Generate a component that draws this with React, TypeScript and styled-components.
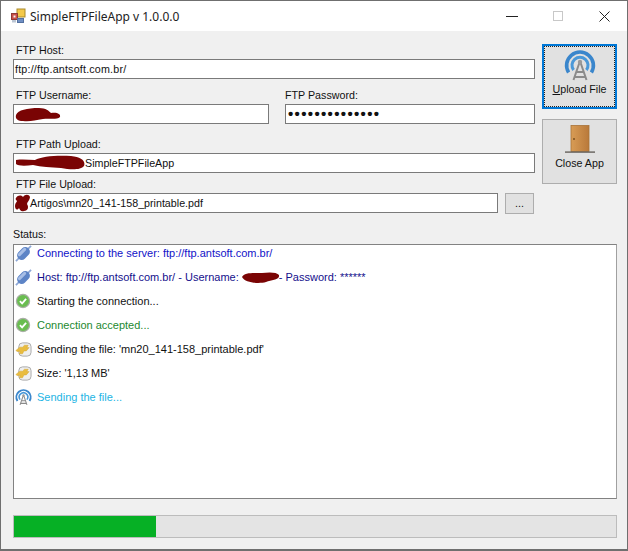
import React from "react";
import styled, { createGlobalStyle } from "styled-components";

const GlobalStyle = createGlobalStyle`
  html, body {
    margin: 0;
    padding: 0;
    background: #f0f0f0;
  }
`;

const Window = styled.div`
  box-sizing: border-box;
  width: 628px;
  height: 551px;
  display: flex;
  flex-direction: column;
  background: #f0f0f0;
  border: 1px solid #6f6f6f;
  border-bottom-width: 2px;
  font-family: "Liberation Sans", Arial, sans-serif;
  font-size: 10.7px;
  color: #111;
`;

const TitleBar = styled.div`
  display: flex;
  align-items: center;
  height: 30px;
  flex-shrink: 0;
  background: #fff;
  padding-left: 9px;
`;

const Title = styled.span`
  margin-left: 4px;
  flex: 1;
  font-family: "Noto Sans", sans-serif;
  font-size: 12px;
  color: #222;
`;

const CaptionButton = styled.div`
  width: 46px;
  height: 30px;
  display: flex;
  align-items: center;
  justify-content: center;
`;

const Body = styled.div`
  display: flex;
  flex-direction: column;
  padding: 13px 10px 0 12px;
`;

const TopArea = styled.div`
  display: flex;
  gap: 7px;
`;

const Fields = styled.div`
  width: 522px;
  display: flex;
  flex-direction: column;
`;

const Row = styled.div<{ $top?: number }>`
  display: flex;
  gap: 16px;
  margin-top: ${(p) => p.$top ?? 0}px;
`;

const Field = styled.div<{ $top?: number; $width?: number }>`
  display: flex;
  flex-direction: column;
  margin-top: ${(p) => p.$top ?? 0}px;
  width: ${(p) => (p.$width ? `${p.$width}px` : "100%")};
`;

const FieldLabel = styled.label<{ $flush?: boolean }>`
  height: 15px;
  line-height: 13px;
  padding-left: ${(p) => (p.$flush ? 0 : 3)}px;
`;

const TextBox = styled.div<{ $width?: number; $spacing?: number }>`
  box-sizing: border-box;
  height: 20px;
  width: ${(p) => (p.$width ? `${p.$width}px` : "100%")};
  display: flex;
  align-items: center;
  padding-left: 1px;
  letter-spacing: ${(p) => p.$spacing ?? 0}px;
  background: #fff;
  border: 1px solid #7a7a7a;
  white-space: pre;
`;

const Dots = styled.span`
  font-size: 15px;
  font-weight: bold;
  letter-spacing: 1.35px;
  line-height: 18px;
  padding-left: 1px;
  color: #111;
`;

const FileRow = styled.div`
  display: flex;
  gap: 7px;
  align-items: flex-start;
`;

const BrowseButton = styled.div`
  box-sizing: border-box;
  width: 29px;
  height: 21px;
  display: flex;
  align-items: center;
  justify-content: center;
  padding-bottom: 2px;
  background: #e1e1e1;
  border: 1px solid #adadad;
`;

const Buttons = styled.div`
  display: flex;
  flex-direction: column;
  gap: 10px;
  width: 75px;
`;

const ActionButton = styled.div<{ $focused?: boolean }>`
  position: relative;
  box-sizing: border-box;
  height: 65px;
  display: flex;
  flex-direction: column;
  align-items: center;
  padding-top: ${(p) => (p.$focused ? 4 : 5)}px;
  background: #e1e1e1;
  border: ${(p) => (p.$focused ? "2px solid #0078d7" : "1px solid #adadad")};
  ${(p) =>
    p.$focused &&
    `&::after {
      content: "";
      position: absolute;
      inset: 0;
      border: 1px dotted #222;
    }`}
`;

const ButtonLabel = styled.span<{ $top: number }>`
  margin-top: ${(p) => p.$top}px;
  line-height: 14px;
`;

const Mnemonic = styled.span`
  text-decoration: underline;
`;

const StatusLabel = styled.div`
  margin-top: 14px;
  height: 16px;
  line-height: 13px;
`;

const StatusList = styled.div`
  box-sizing: border-box;
  width: 604px;
  height: 255px;
  display: flex;
  flex-direction: column;
  gap: 8px;
  font-size: 11px;
  background: #fff;
  border: 1px solid #828282;
  border-right-color: #a0a0a0;
`;

const StatusRow = styled.div<{ $color: string }>`
  height: 16px;
  flex-shrink: 0;
  display: flex;
  align-items: center;
  padding-left: 1px;
  color: ${(p) => p.$color};
  white-space: pre;
`;

const StatusIcon = styled.span`
  width: 22px;
  height: 16px;
  display: flex;
  align-items: center;
`;

const ProgressTrack = styled.div`
  box-sizing: border-box;
  width: 604px;
  height: 23px;
  margin-top: 16px;
  background: #e4e4e4;
  border: 1px solid #bcbcbc;
`;

const ProgressFill = styled.div`
  height: 100%;
  background: #06b025;
`;

const Redaction = ({ width, height, d, viewBox }: { width: number; height: number; d: string; viewBox: string }) => (
  <svg width={width} height={height} viewBox={viewBox} style={{ flexShrink: 0 }}>
    <path d={d} fill="#7a0404" />
  </svg>
);

const AppIcon = () => (
  <svg width="16" height="16" viewBox="0 0 16 16">
    <rect x="7" y="1" width="8" height="8" fill="#f4c94a" stroke="#a98a2c" />
    <rect x="1.5" y="5.5" width="6" height="6" fill="#c8504a" stroke="#8e3a36" />
    <rect x="3.5" y="7.5" width="2" height="2" fill="#f2f2f2" />
    <rect x="7.5" y="10.5" width="6" height="4" fill="#6f8fc4" stroke="#53709f" />
    <rect x="2" y="12" width="4" height="2.5" fill="#bcc6d4" />
  </svg>
);

const Antenna = ({ size }: { size: number }) => (
  <svg width={size} height={size} viewBox="0 0 32 32">
    <path d="M4.6 22.5 A13.4 13.4 0 1 1 27.4 22.5" fill="none" stroke="#3a86cc" strokeWidth="3.6" />
    <path d="M9.6 20 A8 8 0 1 1 22.4 20" fill="none" stroke="#4a98d8" strokeWidth="3" />
    <path d="M16 11 L9.5 30 M16 11 L22.5 30 M12.6 22 H19.4 M11 27 H21" fill="none" stroke="#8b8b8b" strokeWidth="2" />
    <circle cx="16" cy="12" r="2.2" fill="#9a9a9a" />
  </svg>
);

const Door = () => (
  <svg width="32" height="28" viewBox="0 0 32 28">
    <defs>
      <linearGradient id="doorWood" x1="0" x2="1" y1="0" y2="0">
        <stop offset="0" stopColor="#d89c55" />
        <stop offset="1" stopColor="#b9793a" />
      </linearGradient>
    </defs>
    <rect x="7" y="0.5" width="18" height="26" fill="url(#doorWood)" stroke="#a97338" strokeWidth="0.8" />
    <circle cx="10" cy="14" r="1" fill="#7a4f1f" />
    <rect x="1" y="26.4" width="30" height="1.4" fill="#66625c" />
  </svg>
);

const Plug = () => (
  <svg width="17" height="17" viewBox="0 0 18 18">
    <path d="M1 17 L17 1" stroke="#8da7d6" strokeWidth="1.8" />
    <g transform="rotate(-45 9 9)">
      <rect x="1.5" y="4.2" width="15" height="9.6" rx="4.6" fill="#5d84c6" />
      <rect x="3.5" y="5.2" width="11" height="3.2" rx="1.6" fill="#a7bee6" />
    </g>
  </svg>
);

const Check = () => (
  <svg width="16" height="16" viewBox="0 0 18 18">
    <circle cx="9" cy="9" r="7.4" fill="#69bd50" stroke="#a9aea6" strokeWidth="1.4" />
    <path d="M5.5 9.2 L8 11.7 L12.5 6.6" fill="none" stroke="#fff" strokeWidth="2" />
  </svg>
);

const Transfer = () => (
  <svg width="17" height="17" viewBox="0 0 18 18">
    <rect x="4" y="2" width="13" height="14" rx="4" fill="#efefef" stroke="#a8a8a8" />
    <path d="M1 10 L5 6.5 H8 L10 4.5 H14 L12.5 7 H15 L12 10.5 H9.5 L8 13.5 H4.5 L5.5 11 H2 Z" fill="#e9bc3f" stroke="#cfa431" strokeWidth="0.5" />
  </svg>
);

const statusLines: { color: string; icon: React.ReactNode; text: React.ReactNode }[] = [
  { color: "#1212c8", icon: <Plug />, text: "Connecting to the server: ftp://ftp.antsoft.com.br/" },
  {
    color: "#14108c",
    icon: <Plug />,
    text: (
      <>
        {"Host: ftp://ftp.antsoft.com.br/ - Username: "}
        <Redaction width={37} height={11} viewBox="0 0 37 11" d="M0 5 C2 0 12 1 20 1 C27 0 35 0 37 3 C38 8 30 8 24 10 C17 12 3 11 0 5 Z" />
        {"- Password: ******"}
      </>
    ),
  },
  { color: "#111", icon: <Check />, text: "Starting the connection..." },
  { color: "#23892f", icon: <Check />, text: "Connection accepted..." },
  { color: "#111", icon: <Transfer />, text: "Sending the file: 'mn20_141-158_printable.pdf'" },
  { color: "#111", icon: <Transfer />, text: "Size: '1,13 MB'" },
  { color: "#22b4e4", icon: <Antenna size={17} />, text: "Sending the file..." },
];

const App = () => (
  <Window>
    <GlobalStyle />
    <TitleBar>
      <AppIcon />
      <Title>SimpleFTPFileApp v 1.0.0.0</Title>
      <CaptionButton>
        <svg width="12" height="10" viewBox="0 0 12 10">
          <path d="M0 5.5 H12" stroke="#222" />
        </svg>
      </CaptionButton>
      <CaptionButton>
        <svg width="10" height="10" viewBox="0 0 10 10">
          <rect x="0.5" y="0.5" width="9" height="9" fill="none" stroke="#c8c8c8" />
        </svg>
      </CaptionButton>
      <CaptionButton>
        <svg width="11" height="11" viewBox="0 0 11 11">
          <path d="M0.5 0.5 L10.5 10.5 M10.5 0.5 L0.5 10.5" stroke="#222" />
        </svg>
      </CaptionButton>
    </TitleBar>

    <Body>
      <TopArea>
        <Fields>
          <Field>
            <FieldLabel>FTP Host:</FieldLabel>
            <TextBox $spacing={0.2}>ftp://ftp.antsoft.com.br/</TextBox>
          </Field>
          <Row $top={10}>
            <Field $width={256}>
              <FieldLabel>FTP Username:</FieldLabel>
              <TextBox>
                <Redaction width={46} height={15} viewBox="0 0 46 15" d="M1 8 C3 3 12 1 24 1 C31 1 34 4 36 6 C42 5 46 7 45 10 C42 13 34 11 28 12 C20 13 15 15 8 14 C3 14 0 12 1 8 Z" />
              </TextBox>
            </Field>
            <Field $width={250}>
              <FieldLabel $flush>FTP Password:</FieldLabel>
              <TextBox>
                <Dots>••••••••••••••</Dots>
              </TextBox>
            </Field>
          </Row>
          <Field $top={14}>
            <FieldLabel>FTP Path Upload:</FieldLabel>
            <TextBox>
              <Redaction width={70} height={16} viewBox="0 0 70 16" d="M1 5 C8 4 14 5 20 5 C26 1 44 0 56 1 C66 2 71 6 69 11 C66 15 56 15 46 13 C36 12 26 12 18 10 C10 11 3 11 1 9 Z" />
              SimpleFTPFileApp
            </TextBox>
          </Field>
          <Field $top={5}>
            <FieldLabel>FTP File Upload:</FieldLabel>
            <FileRow>
              <TextBox $width={485}>
                <Redaction width={15} height={18} viewBox="0 0 15 18" d="M1 4 C3 1 6 1 8 3 C10 0 14 0 15 3 C15 6 12 8 12 10 C14 13 13 17 9 17 C6 18 5 16 4 14 C2 17 0 15 0 12 C0 9 2 8 2 7 C1 6 0 5 1 4 Z" />
                Artigos\mn20_141-158_printable.pdf
              </TextBox>
              <BrowseButton>...</BrowseButton>
            </FileRow>
          </Field>
        </Fields>
        <Buttons>
          <ActionButton $focused>
            <Antenna size={32} />
            <ButtonLabel $top={0}>
              <Mnemonic>U</Mnemonic>pload File
            </ButtonLabel>
          </ActionButton>
          <ActionButton>
            <Door />
            <ButtonLabel $top={3}>Close App</ButtonLabel>
          </ActionButton>
        </Buttons>
      </TopArea>

      <StatusLabel>Status:</StatusLabel>
      <StatusList>
        {statusLines.map((line, i) => (
          <StatusRow key={i} $color={line.color}>
            <StatusIcon>{line.icon}</StatusIcon>
            {line.text}
          </StatusRow>
        ))}
      </StatusList>
      <ProgressTrack>
        <ProgressFill style={{ width: `${(142 / 602) * 100}%` }} />
      </ProgressTrack>
    </Body>
  </Window>
);

export default App;
